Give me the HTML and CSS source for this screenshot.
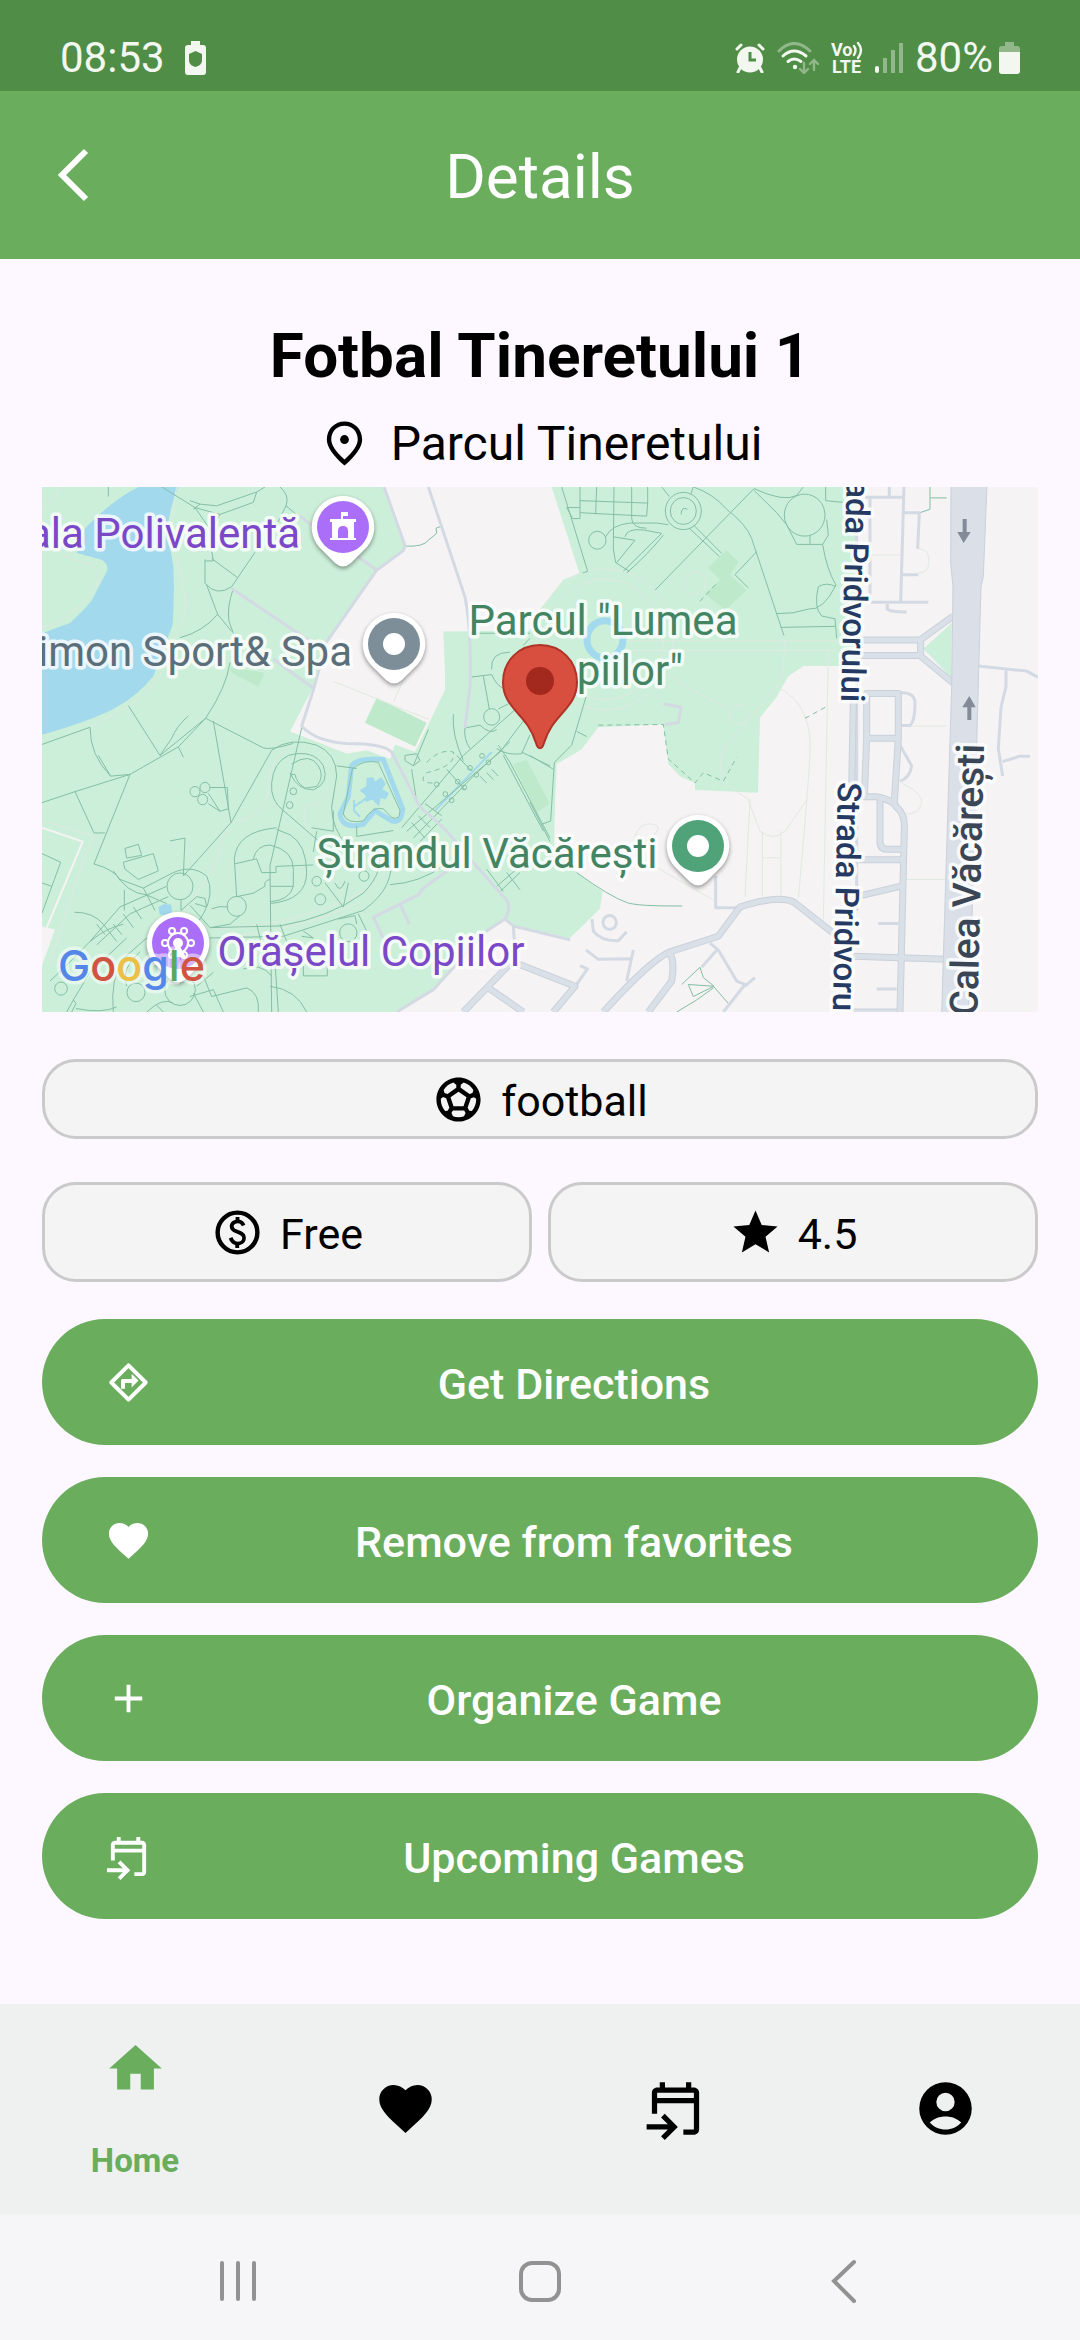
FILE: index.html
```html
<!DOCTYPE html>
<html lang="en">
<head>
    <meta charset="UTF-8">
    <meta name="viewport" content="width=device-width, initial-scale=1.0">
    <title>Details</title>
    <link rel="stylesheet" href="styles.css">
</head>
<body>
    <!-- Shared icons -->
    <svg class="defs" width="0" height="0" aria-hidden="true">
        <symbol id="heart" viewBox="0 0 24 24">
            <path d="M12 21.35l-1.45-1.32C5.4 15.36 2 12.28 2 8.5 2 5.42 4.42 3 7.5 3c1.74 0 3.41.81 4.5 2.09C13.09 3.81 14.76 3 16.5 3 19.58 3 22 5.42 22 8.5c0 3.78-3.4 6.86-8.55 11.54z"/>
        </symbol>
        <symbol id="calendar" viewBox="0 0 24 24">
            <path d="M6 2h2v2h8V2h2v2h1c1.1 0 2 .9 2 2v14c0 1.1-.9 2-2 2h-4v-2h4V10H5v4H3V6c0-1.1.9-2 2-2h1zM5 6v2h14V6z"/>
            <path d="M7.9 14l5 5-5 5-1.4-1.4L9.1 20H1v-2h8.1l-2.6-2.6z"/>
        </symbol>
    </svg>

    <div class="status-bar">
        <span class="status-text">08:53</span>
        <svg class="battery-saver" width="21" height="34" viewBox="0 0 21 34">
            <path fill-rule="evenodd" d="M6 0h9v4h3a3 3 0 0 1 3 3v24a3 3 0 0 1-3 3H3a3 3 0 0 1-3-3V7a3 3 0 0 1 3-3h3zM10.500 10L4 13v6c0 4 3 6 6.500 7 3.500-1 6.500-3 6.500-7v-6z"/>
        </svg>
        <div class="status-icons">
            <svg width="30" height="30" viewBox="0 0 30 30">
                <circle cx="15" cy="16.500" r="13"/>
                <path class="line" stroke-width="3" d="M2 6l4-4M28 6l-4-4M5 25l-2 4M25 25l2 4"/>
                <path class="hand" d="M15 9v8h6"/>
            </svg>
            <svg width="42" height="32" viewBox="0 0 42 32">
                <g class="line" stroke-width="3">
                    <path class="faded" d="M2 9Q17-6 33 9"/>
                    <path d="M6 14q11-10 23 0M11 19.500q6-5 13 0"/>
                </g>
                <circle cx="18" cy="25" r="2.200"/>
                <path class="line faded" stroke-width="2.400" d="M27 21v9m-4-3l4 4 4-4M37 28v-9m-4 3l4-4 4 4"/>
            </svg>
            <svg width="32" height="32" viewBox="0 0 32 32">
                <text class="volte" x="0" y="14">Vo</text>
                <text class="volte" x="1" y="31">LTE</text>
                <path class="line" stroke-width="2.400" d="M23 4q3 4 0 9M27 1q6 7 0 15"/>
            </svg>
            <svg class="signal" width="28" height="30" viewBox="0 0 28 30">
                <rect y="23" width="4" height="7" rx="2"/>
                <path class="faded" d="M8 15h4v15H8zM16 7h4v23h-4zM24 0h4v30h-4z"/>
            </svg>
            <span class="status-text">80%</span>
            <svg width="21" height="32" viewBox="0 0 21 32">
                <path class="faded" d="M6 0h9v4h3a3 3 0 0 1 3 3v3H0V7a3 3 0 0 1 3-3h3z"/>
                <path d="M0 10h21v19a3 3 0 0 1-3 3H3a3 3 0 0 1-3-3z"/>
            </svg>
        </div>
    </div>

    <header class="header">
        <button class="back" aria-label="Back">
            <svg width="32" height="54" viewBox="0 0 32 54"><path d="M29 3L5 27l24 24"/></svg>
        </button>
        <h1 class="nudge">Details</h1>
    </header>

    <main>
        <h2>Fotbal Tineretului 1</h2>
        <div class="address">
            <svg class="icon" viewBox="0 0 24 24">
                <path fill-rule="evenodd" d="M12 2c-4.300 0-8 3.300-8 8.200 0 3.300 2.700 7.300 8 11.800 5.300-4.500 8-8.500 8-11.800C20 5.300 16.300 2 12 2zm0 17.300c-4.100-3.700-6-6.700-6-9.100C6 6.600 8.600 4 12 4s6 2.600 6 6.200c0 2.400-1.900 5.400-6 9.100z"/>
                <circle cx="12" cy="10.200" r="2"/>
            </svg>
            <span>Parcul Tineretului</span>
        </div>

        <svg class="map" viewBox="0 0 996 525" role="img" aria-label="Map">
            <defs>
                <g id="pin">
                    <path class="pin-body" d="M0-31A31 31 0 0 1 24 20L8 36Q0 43-8 36L-24 20A31 31 0 0 1 0-31z"/>
                    <circle r="26"/>
                </g>
            </defs>
            <rect class="land" width="996" height="525"/>

            <!-- Terrain, drawn on a grid three times finer than the labels -->
            <g transform="translate(-12 -7) scale(.33333 .34435)">
                <path class="park" d="M36 20H1062L1125 190v15L1040 262 890 470 862 550 848 605 780 730 860 760 950 795 1010 785 1080 810 1095 768 1155 790 1190 720 1245 610V560L1240 440 1500 437 1530 375 1600 290 1648 270 1565 20H2480V540H2320L2275 570 2240 630 2190 690 2184 908 1995 900V880L1950 860 1915 825 1900 710 1705 718 1655 782 1580 825 1575 950 1572 1070 1640 1140 1718 1195 1710 1245 1620 1330 1440 1290 1425 1275 1370 1310 1280 1410 1210 1480 1100 1545H36zM2765 415L2680 490 2765 575z"/>
                <path class="land" d="M36 1297L75 1305 36 1410z"/>
                <path class="field" d="M1040 632L1190 705 1155 775 1005 705zM600 545L705 560 685 600 605 560zM2090 203L2125 238 2100 275 2150 320 2085 378 2025 330 2070 290 2035 255zM1450 825L1490 812 1560 940 1520 965z"/>
                <path class="water" d="M36 445L120 415Q165 375 185 350L232 262Q234 238 210 230L140 212 165 140Q245 60 325 20H445Q418 80 412 150L430 250Q434 330 428 420L370 570Q320 630 250 665T36 740zM385 1240l15-8h22l5 18-8 15-30-3zM1010 865l20-2 5 12 20-12 12 20-10 15 20 12-10 18-15-5-5 25-20-20-20 8 0-20-18-15 20-12z"/>
                <g class="water-line">
                    <path stroke-width="5" d="M965 830Q985 805 1060 812L1118 955Q1115 1000 1085 990L1035 960 1000 1000Q935 1015 930 970L955 920z"/>
                    <path stroke-width="2" d="M1215 960L1385 790M1015 920L970 950M972 930V960L990 978"/>
                    <circle cx="1725" cy="463" r="54" stroke-width="7"/>
                </g>

                <g class="faint">
                    <path d="M36 430Q140 400 205 295 215 270 190 250L100 220M36 90L95 20M440 20Q410 140 448 260T445 430M180 718L300 655Q420 570 440 440M36 990Q110 1010 190 1035L140 1160 60 1400M790 770Q720 800 715 890T620 990Q580 1010 560 1110L420 1320M890 860Q910 930 830 950 800 1000 880 1060"/>
                    <circle cx="1725" cy="463" r="175"/>
                    <circle cx="1725" cy="463" r="205"/>
                    <circle cx="1995" cy="300" r="32"/>
                    <circle cx="2125" cy="680" r="28"/>
                    <path d="M1790 467H2420M1800 495H2420M1860 530Q1960 600 2095 665M2260 430Q2270 560 2240 600T2110 745 2160 930L2145 1210M2240 600Q2350 650 2340 800T2305 1215M2155 930L2190 1020Q2230 1050 2265 1020L2330 930M2197 1020V1210M2253 1020V1210M2197 1097H2255M2395 500L2380 1280M1810 1060Q1820 990 1870 1000T1800 1080L2050 1220M910 585L1195 695M1090 645L1130 560M2620 715H2750M2615 880Q2680 910 2675 940 2665 970 2630 970M2620 1160H2750M2510 218H2610M2665 200Q2700 200 2697 240 2695 270 2665 270M540 1300Q700 1310 910 1235 1060 1180 1080 1110M560 1330Q800 1310 980 1230M250 1545Q240 1400 330 1330"/>
                </g>
                <path class="white-line" d="M36 1010L158 1050 50 1300"/>

                <!-- Footpaths -->
                <g class="paths">
                    <path d="M36 768L180 718M235 20V48M395 20L495 80 570 100 670 65 680 35 560 75 510 70 480 60M495 80L545 150M680 35L705 20M750 20Q780 45 768 75L735 140M768 75L805 105M510 70L490 85M570 100L545 140M525 235H550L545 205M525 230V300Q560 340 605 310L675 210M545 228L622 283M530 305L563 390Q520 440 450 458M563 390L605 440M610 315Q590 370 597 410L610 445M600 530Q590 600 527 692L390 800 295 655M475 685Q440 715 425 750L390 800M527 692L700 778Q720 785 790 765M550 700L603 995 725 785M36 937L135 905 300 855 445 775 527 692M445 775L460 805M180 718Q180 800 242 860L300 855M300 855L192 1115M135 905L192 1025H225M242 860L205 800M603 995L460 1150 465 1040 420 1048M480 905a15 15 0 1 0 30 0 15 15 0 1 0-30 0M510 893a15 15 0 1 0 30 0 15 15 0 1 0-30 0M503 928a15 15 0 1 0 30 0 15 15 0 1 0-30 0M540 893H592L595 955 570 962 535 910M570 962L535 940"/>
                    <path d="M815 720L720 1120 725 1545M725 785Q780 745 860 770 920 795 920 860L905 950Q905 1010 950 1060M725 880Q730 820 775 800 850 780 880 830 900 880 850 900 800 900 780 850M725 880Q720 930 760 960L880 1060M785 825Q840 790 865 830 885 860 860 890L825 895Q800 880 795 855H780M740 1010Q620 1020 613 1100L620 1210M740 1015L780 1030Q830 1060 830 1140T720 1230M670 1100Q680 1060 720 1060 790 1075 790 1130V1180H720M790 1180Q780 1220 720 1225M613 1115L680 1100 695 1140H738V1122L850 1118M720 1160Q700 1165 705 1180L670 1200 620 1210M845 1010L910 1020V960M860 1020L850 1080M920 830L980 838"/>
                    <circle cx="620" cy="1238" r="29"/><circle cx="450" cy="1180" r="39"/>
                    <circle cx="790" cy="904" r="10"/><circle cx="779" cy="944" r="10"/>
                    <circle cx="860" cy="1165" r="14"/><circle cx="871" cy="1218" r="16"/>
                    <circle cx="1002" cy="1150" r="15"/><circle cx="93" cy="1477" r="19"/>
                    <circle cx="318" cy="1488" r="27"/><circle cx="1385" cy="688" r="24"/>
                    <circle cx="955" cy="1315" r="26"/><circle cx="450" cy="1480" r="46"/>
                    <path d="M967 840Q1000 810 1045 820L1110 960Q1110 990 1085 980L1060 955Q1030 945 1000 990 950 1000 940 970zM285 1070L325 1058 335 1090 290 1098zM280 1110L370 1085 385 1135 325 1160 285 1130zM192 1115Q250 1130 270 1160L340 1185Q380 1165 410 1150 480 1110 530 1150 555 1200 520 1260L480 1320M250 1135Q290 1200 350 1205L410 1230M283 1190V1250M340 1185L375 1250M180 1340L270 1240 410 1180M200 1350L300 1260 415 1210M225 1320L200 1290M250 1290L275 1320M280 1260L310 1300M310 1240L335 1275M133 1255Q190 1255 220 1290L260 1340M36 1085L92 1110 36 1258M36 1170L65 1180M453 1218V1250L500 1210 525 1215 530 1240 495 1230M480 1235L540 1300 750 1295Q900 1270 1000 1200 1070 1130 1040 1070M545 1245Q570 1235 595 1240M540 1300L600 1290 630 1265M540 1330L760 1325 1000 1250Q1100 1180 1080 1090M885 1170L940 1240 955 1170M915 1170Q930 1205 945 1165M980 1005V1035L1090 1018M950 1035L980 1060M1080 1175Q1170 1170 1240 1120"/>
                    <path d="M60 1455Q100 1420 180 1340 230 1300 280 1290M130 1510L180 1430 290 1330M110 1545L130 1510 138 1520 125 1545M250 1545Q240 1450 280 1390L350 1330M290 1470Q270 1420 330 1370M138 1535Q220 1550 260 1530M350 1545Q400 1500 430 1520M380 1525L400 1545M490 1490L520 1545M480 1500L550 1480 580 1545M500 1470L550 1430M520 1440L545 1500 650 1475Q690 1490 685 1545M680 1290L695 1350 735 1400 745 1545M720 1470Q800 1480 830 1545M725 1440Q690 1400 640 1420M750 1290L770 1340M820 1310L850 1330 815 1325M925 1275L975 1265 980 1290M985 1260L1010 1310M820 1410V1440H892V1410"/>
                    <path d="M1115 1010L1300 800 1475 650M1130 1020L1410 790 1480 700M1150 1040L1330 860 1440 760M1170 1050L1235 985M1145 995L1185 1040M1165 975L1200 1010M1185 940L1235 975M1250 840L1305 900M1280 800L1325 845M1145 840L1160 935M1125 800L1160 795 1170 815 1150 830 1125 815zM1195 725L1150 830M1270 680Q1265 740 1300 815M1305 720Q1300 750 1320 780M1305 720L1350 712Q1380 740 1400 725M1325 572L1385 565M1360 570L1378 665M1385 550Q1380 500 1440 500M1385 565Q1400 600 1430 610M1400 780Q1430 800 1475 795M1405 770L1440 820 1560 1040M1420 800L1540 1020M1475 790L1560 830M1475 795L1500 740M1405 665L1435 650M1315 445H1500M1480 480L1500 460M1370 1130L1420 1195M1430 1140L1470 1190M1470 1140L1410 1195M1460 1130L1400 1180M1350 860L1370 880M1370 850L1390 870M1385 840L1405 860"/>
                    <circle cx="1246" cy="912" r="7"/><circle cx="1283" cy="876" r="7"/><circle cx="1320" cy="836" r="7"/>
                    <circle cx="1356" cy="801" r="7"/><circle cx="1265" cy="930" r="7"/><circle cx="1303" cy="893" r="7"/>
                    <circle cx="1339" cy="856" r="7"/><circle cx="1375" cy="820" r="7"/><circle cx="1220" cy="884" r="7"/>
                    <path stroke-dasharray="5 4" d="M1190 820Q1230 780 1270 790 1280 830 1190 850 1160 880 1210 880M1705 712L1900 710 1915 810 1995 880 2020 850 2080 875 2120 805M2325 692L2395 655M2010 352L2060 300"/>
                    <path d="M1595 20L1673 265 1658 270M1650 20V112L1628 112 1610 80H1650M1650 60L1853 67V20M1650 95L1850 105 1853 67M1700 20L1697 100M1752 20L1750 200 1757 240 1798 265M1805 20V110Q1805 140 1850 140M1702 175m-26 0a26 26 0 1 0 52 0 26 26 0 1 0-52 0M1727 165Q1745 130 1800 125H1880L1915 130M1750 165L1815 175 1760 240M1785 165Q1790 140 1840 145L1895 155 1780 265M1900 160Q1860 210 1790 270"/>
                    <circle cx="1960" cy="90" r="54"/><circle cx="1960" cy="90" r="39"/>
                    <path d="M1953 100Q1955 75 1972 85M1895 20L1918 48M1983 40L1990 20M1978 140L2068 222M1990 130L2075 213M1990 20Q2050 40 2090 85 2150 130 2165 170L2262 452M2172 25L1875 320M2180 208L2115 275 2155 313M2172 25Q2260 65 2300 45L2320 20M2172 30L2240 95 2270 130 2300 187H2378L2395 160 2390 115M2340 160V187M2387 20V60L2440 65M2378 187Q2390 260 2418 305 2380 380 2335 375 2290 390 2240 388M2418 310Q2390 295 2365 310 2350 370 2375 395L2415 403 2420 460M2252 428L2415 425"/>
                    <circle cx="2324" cy="102" r="61"/>
                    <path d="M1668 630L1625 770 1573 820 1562 990 1535 1000M1500 800L1570 840M1500 935L1560 1050M1640 730L1670 745M1640 1140Q1740 1210 1790 1227 1820 1238 1957 1237M2700 20V85L2670 95M2700 52H2750M1955 1465L2010 1415 2020 1445 2052 1470 1990 1500 1975 1465 2050 1470 2095 1520M2050 1475L2000 1510 1940 1545M1125 192Q1180 195 1195 175L1220 155 1218 140 1232 135"/>
                </g>

                <!-- Streets -->
                <g class="street narrow">
                    <path d="M1062 20L1125 190 1120 205 1040 262 890 470 850 610 815 715Q860 760 950 765 1060 765 1085 790L1170 950Q1260 1020 1310 1090L1430 1220Q1445 1240 1425 1275L1450 1295 1620 1335M1195 20L1305 340Q1325 440 1320 600L1305 720M605 315L850 475M730 520L850 605M960 205L1040 262M810 105L850 135M1425 1275L1370 1310 1210 1480 1100 1545M1260 1130L1180 1185 1165 1205 1030 1270 1060 1330M1110 1230L1138 1290M1450 1295L1455 1370"/>
                    <path d="M2480 130V1250M2520 50V350M2505 50H2625M2578 20V50M2622 20L2612 355M2520 355H2695M2622 95H2668L2663 200M2615 275H2665M2572 360V375Q2580 383 2630 383M2845 540L2990 555 3024 573M2928 548V600L2913 660 2905 780 2918 860M2918 818L2970 802H3000M1900 650L1953 660 1945 705 1905 710M2057 1150V1242H2120M2610 618Q2655 615 2655 650 2655 700 2640 713H2610M2610 770L2645 830Q2640 865 2610 875M2545 1288H2605M2540 1478H2600M1686 1275L1690 1310Q1715 1340 1765 1338L1790 1312M1668 1365L1705 1392 1800 1390M1810 1365L1790 1455M1650 1410L1672 1420 1640 1465M2040 1345L2065 1365 2120 1455 2145 1465 2080 1545M2145 1470L2175 1445M2065 1360L2015 1415"/>
                    <circle cx="1739" cy="1285" r="20"/>
                </g>
                <g class="street-edge">
                    <path d="M2480 465H2670L2770 395M2480 510H2670L2770 590M2672 465V510M2470 640L2465 900M2510 620H2605V750H2510zM2510 750L2503 920H2540Q2590 930 2600 950 2625 970 2623 1010L2610 1545M2605 750L2593 935M2550 930V1050Q2550 1072 2570 1072H2620M2480 1103H2620M2480 1210L2620 1178M2470 1383L2750 1392M2470 1545H2600M2415 1320L2290 1225Q2240 1205 2130 1240L2065 1325 1920 1370Q1860 1395 1720 1545M1920 1375Q1935 1400 1925 1455L1855 1545M1450 1400L1635 1470 1570 1545M1440 1405L1300 1545M1375 1475L1480 1545"/>
                </g>
                <g class="street">
                    <path d="M2480 465H2670L2770 395M2480 510H2670L2770 590M2672 465V510M2470 640L2465 900M2510 620H2605V750H2510zM2510 750L2503 920H2540Q2590 930 2600 950 2625 970 2623 1010L2610 1545M2605 750L2593 935M2550 930V1050Q2550 1072 2570 1072H2620M2480 1103H2620M2480 1210L2620 1178M2470 1383L2750 1392M2470 1545H2600M2415 1320L2290 1225Q2240 1205 2130 1240L2065 1325 1920 1370Q1860 1395 1720 1545M1920 1375Q1935 1400 1925 1455L1855 1545M1450 1400L1635 1470 1570 1545M1440 1405L1300 1545M1375 1475L1480 1545"/>
                </g>
                <path class="avenue" d="M2763 15H2871L2860 280 2853 310 2825 1300 2815 1550H2735L2765 600 2769 310 2762 240z"/>
                <path class="arrow" d="M2798 113h12v38h12l-21 32-19-32h16zM2812 697v-37h-15l21-33 19 33h-13v37z"/>
            </g>

            <!-- Labels -->
            <text class="label culture" x="258" y="61" text-anchor="end">ala Polivalentă</text>
            <text class="label sport" x="310" y="179" text-anchor="end">imon Sport&amp; Spa</text>
            <text class="label green" x="561" y="148" text-anchor="middle">Parcul "Lumea</text>
            <text class="label green" x="641" y="198" text-anchor="end">piilor"</text>
            <text class="label green" x="445" y="381" text-anchor="middle">Ștrandul Văcărești</text>
            <text class="label culture" x="329" y="479" text-anchor="middle">Orășelul Copiilor</text>
            <text class="label road" text-anchor="end" transform="translate(799 215) rotate(91.500)">ada Pridvorului</text>
            <text class="label road" transform="translate(796 295) rotate(91.300)">Strada Pridvoru</text>
            <text class="label boulevard" text-anchor="end" transform="translate(942 257) rotate(-88.600)">Calea Văcărești</text>

            <!-- Pins -->
            <g class="pin-culture" transform="translate(301 40)">
                <use href="#pin"/>
                <path class="glyph" d="M-2-15h7v4H0v3h13v3h-2v16h2v2h-26v-2h2V-5h-2v-3h11zM-5 11H5V4Q5-1 0-1T-5 4z"/>
            </g>
            <g class="pin-sport" transform="translate(352 157)">
                <use href="#pin"/>
                <circle class="glyph" r="11"/>
            </g>
            <g class="pin-green" transform="translate(656 359)">
                <use href="#pin"/>
                <circle class="glyph" r="11"/>
            </g>
            <g class="pin-culture" transform="translate(136 456)">
                <use href="#pin"/>
                <circle class="glyph" r="5"/>
                <path class="glyph" d="M0 0l8 14H-8z"/>
                <circle class="wheel" r="10"/>
                <g class="wheel">
                    <circle cx="-6" cy="-12" r="3"/><circle cx="6" cy="-12" r="3"/>
                    <circle cx="-13" r="3"/><circle cx="13" r="3"/>
                    <circle cx="-6" cy="12" r="3"/><circle cx="6" cy="12" r="3"/>
                </g>
            </g>
            <path class="marker" d="M498 158C477 158 461 174 461 195 461 222 485 226 494 256 496 263 500 263 502 256 511 226 535 222 535 195 535 174 519 158 498 158z"/>
            <circle class="marker-dot" cx="498" cy="194" r="14"/>
            <text class="google" x="16" y="494"><tspan class="g-blue">G</tspan><tspan class="g-red">o</tspan><tspan class="g-yellow">o</tspan><tspan class="g-blue">g</tspan><tspan class="g-green">l</tspan><tspan class="g-red">e</tspan></text>
        </svg>

        <div class="chip">
            <svg class="icon" viewBox="0 0 24 24"><path d="M12 2C6.480 2 2 6.480 2 12s4.480 10 10 10 10-4.480 10-10S17.520 2 12 2zm1 3.300l1.350-.950c1.820.560 3.370 1.760 4.380 3.340l-.390 1.340-1.350.460L13 6.700V5.300zm-3.350-.950L11 5.300v1.400L7.010 9.490l-1.350-.460-.390-1.340c1.010-1.570 2.560-2.770 4.380-3.340zM7.080 17.110l-1.140.100C4.730 15.810 4 13.990 4 12c0-.120.010-.230.020-.350l1-.730 1.380.480 1.460 4.340-.780 1.370zm7.420 2.480c-.790.260-1.630.410-2.500.410s-1.710-.150-2.500-.410l-.690-1.490.640-1.100h5.110l.640 1.110-.700 1.480zM14.270 15H9.730l-1.350-4.020L12 8.440l3.630 2.540L14.270 15zm3.790 2.210l-1.140-.100-.790-1.370 1.460-4.340 1.390-.470 1 .730c.010.110.020.220.020.340 0 1.990-.730 3.810-1.940 5.210z"/></svg>
            <span class="nudge">football</span>
        </div>
        <div class="chip-row">
            <div class="chip tall">
                <svg class="icon" viewBox="0 0 24 24">
                    <circle class="ring" cx="12" cy="12" r="9"/>
                    <path d="M12.890 11.100c-1.780-.590-2.640-.960-2.640-1.900 0-1.020 1.110-1.390 1.810-1.390 1.310 0 1.790.990 1.900 1.340l1.580-.670c-.150-.440-.820-1.910-2.660-2.230V5h-1.750v1.260c-2.600.560-2.620 2.850-2.620 2.960 0 2.270 2.250 2.910 3.350 3.310 1.580.560 2.280 1.070 2.280 2.030 0 1.130-1.050 1.610-1.980 1.610-1.820 0-2.340-1.870-2.400-2.090l-1.660.670c.630 2.190 2.280 2.780 2.900 2.960V19h1.750v-1.240c.520-.090 3.020-.590 3.020-3.220.010-1.390-.600-2.610-2.880-3.440z"/>
                </svg>
                <span class="nudge">Free</span>
            </div>
            <div class="chip tall">
                <svg class="icon" viewBox="0 0 24 24"><path d="M12 17.270L18.180 21l-1.640-7.030L22 9.240l-7.190-.610L12 2 9.190 8.630 2 9.240l5.460 4.730L5.820 21z"/></svg>
                <span class="nudge">4.5</span>
            </div>
        </div>

        <div class="actions">
            <button class="action">
                <svg viewBox="0 0 24 24">
                    <path class="ring" d="M12 3.200L20.800 12 12 20.800 3.200 12z"/>
                    <path d="M8.200 15.200V11c0-.5.400-.8.800-.8h4.600V7.500L17.100 11l-3.500 3.600v-2.400h-3.400v3z"/>
                </svg>
                <span class="nudge">Get Directions</span>
            </button>
            <button class="action">
                <svg><use href="#heart"/></svg>
                <span class="nudge">Remove from favorites</span>
            </button>
            <button class="action">
                <svg viewBox="0 0 24 24"><path d="M19 13h-6v6h-2v-6H5v-2h6V5h2v6h6z"/></svg>
                <span class="nudge">Organize Game</span>
            </button>
            <button class="action">
                <svg><use href="#calendar"/></svg>
                <span class="nudge">Upcoming Games</span>
            </button>
        </div>
    </main>

    <nav class="tabs">
        <a class="active" href="#home">
            <svg viewBox="0 0 24 24"><path d="M10 20v-6h4v6h5v-8h3L12 3 2 12h3v8z"/></svg>
            <span>Home</span>
        </a>
        <a href="#favorites" aria-label="Favorites"><svg><use href="#heart"/></svg></a>
        <a href="#games" aria-label="Games"><svg><use href="#calendar"/></svg></a>
        <a href="#profile" aria-label="Profile">
            <svg viewBox="0 0 24 24"><path fill-rule="evenodd" d="M12 2a10 10 0 1 0 0 20 10 10 0 1 0 0-20zm0 4a3.500 3.500 0 1 1 0 7 3.500 3.500 0 1 1 0-7zM6 17.300C7.500 15.800 9.700 15 12 15s4.500.8 6 2.300C16.500 19 14.300 20 12 20s-4.500-1-6-2.700z"/></svg>
        </a>
    </nav>

    <div class="system-nav">
        <button aria-label="Recents"><svg width="44" height="44" viewBox="0 0 44 44"><path d="M6 4v36M22 4v36M38 4v36"/></svg></button>
        <button aria-label="Home screen"><svg width="44" height="44" viewBox="0 0 44 44"><rect x="3" y="4" width="38" height="37" rx="11"/></svg></button>
        <button aria-label="Go back"><svg width="44" height="44" viewBox="0 0 44 44"><path d="M34 3L14 22l20 20"/></svg></button>
    </div>
</body>
</html>
```
FILE: styles.css
```css
* {
    box-sizing: border-box;
}
body {
    font-family: Roboto, "Noto Sans", sans-serif;
    margin: 0;
    min-height: 100vh;
    display: flex;
    flex-direction: column;
    background: #fdf8ff;
    color: #000;
}
h1, h2 {
    margin: 0;
    font-size: 62px;
    line-height: 74px;
}
button {
    font-family: inherit;
    border: none;
    background: none;
    padding: 0;
}
svg {
    display: block;
    flex: none;
}
.defs {
    position: absolute;
}
/* Text sits slightly lower than the icon next to it */
.nudge {
    padding-top: 4px;
}

/* Status bar */
.status-bar {
    display: flex;
    align-items: center;
    height: 91px;
    padding: 25px 60px 0;
    background: #508d46;
    color: #f2f8f0;
}
.status-bar svg {
    fill: #f2f8f0;
}
.status-text {
    font-size: 42px;
    line-height: 48px;
    font-weight: 400;
}
.battery-saver {
    margin-left: 20px;
}
.status-icons {
    display: flex;
    align-items: center;
    gap: 12px;
    margin-left: auto;
}
.status-icons .status-text {
    margin-right: -6px;
}
.line {
    fill: none;
    stroke: #f2f8f0;
    stroke-linecap: round;
}
.hand {
    fill: none;
    stroke: #508d46;
    stroke-width: 3;
}
.faded {
    opacity: 0.4;
}
.volte {
    font-size: 18px;
    font-weight: 700;
}

/* Header */
.header {
    display: grid;
    grid-template-columns: 1fr auto 1fr;
    align-items: center;
    height: 168px;
    padding: 0 57px;
    background: #69ad5d;
    color: #fff;
}
.header h1 {
    font-weight: 400;
}
.back {
    justify-self: start;
}
.back path {
    fill: none;
    stroke: #fff;
    stroke-width: 6;
}

/* Content */
main {
    flex: 1;
    padding: 60px 42px;
}
h2 {
    text-align: center;
    font-weight: 700;
}
.icon {
    width: 53px;
    height: 53px;
}
.address {
    display: flex;
    justify-content: center;
    align-items: center;
    gap: 20px;
    height: 53px;
    margin: 24px 0 17px;
    font-size: 48px;
}
.ring {
    fill: none;
    stroke: currentColor;
    stroke-width: 2;
    stroke-linejoin: round;
}

/* Map */
.map {
    width: 100%;
    height: auto;
    overflow: hidden;
}
.land {
    fill: #f5f3f4;
}
.park {
    fill: #ccefd9;
}
.field {
    fill: #beeacb;
}
.water {
    fill: #a3d9ed;
}
.map path, .map circle {
    vector-effect: non-scaling-stroke;
}
.water-line {
    fill: none;
    stroke: #a3d9ed;
}
.faint {
    fill: none;
    stroke: #e0eae0;
    stroke-width: 1;
}
.white-line {
    fill: none;
    stroke: #f5f3f4;
    stroke-width: 2;
}
.paths {
    fill: none;
    stroke: #84bfa5;
    stroke-width: 1;
}
.street, .street-edge {
    fill: none;
    stroke: #dae0e7;
    stroke-width: 5;
    stroke-linejoin: round;
}
.street-edge {
    stroke: #c9d1da;
    stroke-width: 7;
}
.narrow {
    stroke: #d4dae3;
    stroke-width: 3;
}
.avenue {
    fill: #dadfe8;
    stroke: #c9d1da;
    stroke-width: 1;
}
.arrow {
    fill: #848a97;
}
.label {
    font-size: 42px;
    paint-order: stroke;
    stroke: #fff;
    stroke-opacity: 0.8;
    stroke-width: 7;
    stroke-linejoin: round;
}
.culture {
    fill: #7b48c8;
}
.sport {
    fill: #5b6f7b;
}
.green {
    fill: #438563;
}
.road {
    fill: #253a63;
    font-size: 33px;
    font-weight: 500;
}
.boulevard {
    fill: #3a4656;
    font-size: 39px;
    font-weight: 500;
}
.pin-body {
    fill: #fff;
    filter: drop-shadow(0 2px 2px rgba(0, 0, 0, 0.4));
}
.pin-culture {
    fill: #ab6ef8;
}
.pin-sport {
    fill: #7d8e99;
}
.pin-green {
    fill: #50a378;
}
.glyph {
    fill: #fff;
}
.wheel {
    fill: #ab6ef8;
    fill-opacity: 0;
    stroke: #fff;
    stroke-width: 2;
}
.marker {
    fill: #d84f40;
    stroke: #b03328;
    stroke-width: 2;
}
.marker-dot {
    fill: #a3281e;
}
.google {
    font-family: Inter, sans-serif;
    font-size: 43px;
    font-weight: 500;
    paint-order: stroke;
    stroke: #fff;
    stroke-opacity: 0.5;
    stroke-width: 7;
    stroke-linejoin: round;
}
.g-blue {
    fill: #5586e8;
}
.g-red {
    fill: #d15443;
}
.g-yellow {
    fill: #ecbf47;
}
.g-green {
    fill: #5ba660;
}

/* Chips */
.chip {
    display: flex;
    justify-content: center;
    align-items: center;
    gap: 16px;
    height: 80px;
    margin-top: 47px;
    border: 3px solid #cacaca;
    border-radius: 34px;
    background: #f4f4f4;
    font-size: 43px;
}
.chip-row {
    display: grid;
    grid-template-columns: 1fr 1fr;
    gap: 16px;
    margin-top: 43px;
}
.tall {
    height: 100px;
    margin-top: 0;
}

/* Action buttons */
.actions {
    display: flex;
    flex-direction: column;
    gap: 32px;
    margin-top: 37px;
}
.action {
    display: flex;
    align-items: center;
    height: 126px;
    padding: 0 42px 0 63px;
    border-radius: 63px;
    background: #69ad5d;
    color: #fff;
    font-size: 43px;
    font-weight: 500;
}
.action svg {
    width: 47px;
    height: 47px;
    fill: #fff;
}
.action span {
    flex: 1;
}

/* Bottom tabs */
.tabs {
    display: grid;
    grid-template-columns: repeat(4, 1fr);
    height: 210px;
    background: #eef1f0;
}
.tabs a {
    display: flex;
    flex-direction: column;
    justify-content: center;
    align-items: center;
    gap: 42px;
    padding-bottom: 2px;
    color: #000;
    font-size: 33px;
    line-height: 38px;
    font-weight: 700;
    text-decoration: none;
}
.tabs svg {
    width: 63px;
    height: 63px;
    fill: currentColor;
}
.tabs .active {
    color: #69ad5d;
}

/* System navigation */
.system-nav {
    display: grid;
    grid-template-columns: repeat(3, 28%);
    justify-content: center;
    height: 126px;
    padding-bottom: 8px;
    background: #f6f6f8;
}
.system-nav button {
    display: flex;
    justify-content: center;
    align-items: center;
    padding-top: 16px;
}
.system-nav svg {
    fill: none;
    stroke: #929292;
    stroke-width: 4;
    stroke-linecap: round;
}
```
